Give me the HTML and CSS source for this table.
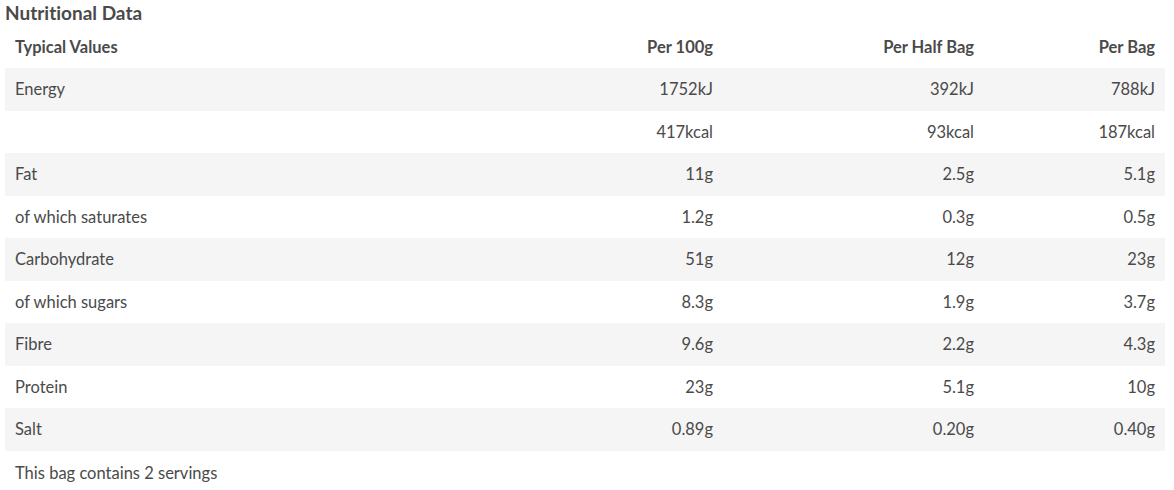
FILE: index.html
```html
<!DOCTYPE html>
<html>
<head>
<meta charset="utf-8">
<link rel="stylesheet" href="styles.css">
</head>
<body>
<section class="nutrition">
  <h2 class="title">Nutritional Data</h2>
  <table class="table">
    <colgroup>
      <col class="c1"><col class="c2"><col class="c3"><col class="c4">
    </colgroup>
    <thead>
      <tr><th class="left">Typical Values</th><th>Per 100g</th><th>Per Half Bag</th><th>Per Bag</th></tr>
    </thead>
    <tbody>
      <tr><td class="left">Energy</td><td>1752kJ</td><td>392kJ</td><td>788kJ</td></tr>
      <tr><td class="left"></td><td>417kcal</td><td>93kcal</td><td>187kcal</td></tr>
      <tr><td class="left">Fat</td><td>11g</td><td>2.5g</td><td>5.1g</td></tr>
      <tr><td class="left">of which saturates</td><td>1.2g</td><td>0.3g</td><td>0.5g</td></tr>
      <tr><td class="left">Carbohydrate</td><td>51g</td><td>12g</td><td>23g</td></tr>
      <tr><td class="left">of which sugars</td><td>8.3g</td><td>1.9g</td><td>3.7g</td></tr>
      <tr><td class="left">Fibre</td><td>9.6g</td><td>2.2g</td><td>4.3g</td></tr>
      <tr><td class="left">Protein</td><td>23g</td><td>5.1g</td><td>10g</td></tr>
      <tr><td class="left">Salt</td><td>0.89g</td><td>0.20g</td><td>0.40g</td></tr>
    </tbody>
  </table>
  <p class="note">This bag contains 2 servings</p>
</section>
</body>
</html>
```
FILE: styles.css
```css
html, body {
  margin: 0;
  padding: 0;
  background: #fff;
}
body {
  font-family: "Source Sans Pro", Lato, "Liberation Sans", sans-serif;
  font-size: 16.5px;
  color: #4a4a4a;
  font-variant-ligatures: none;
}
.nutrition {
  padding: 0 9px 0 5px;
}
.title {
  margin: 0;
  font-size: 19px;
  font-weight: 700;
  line-height: 26px;
  color: #4a4a4a;
}
.table {
  width: 100%;
  border-collapse: collapse;
  table-layout: fixed;
}
.c1 { width: 457px; }
.c2 { width: 261px; }
.c3 { width: 261px; }
.c4 { width: 181px; }
.table th, .table td {
  padding: 10px 10px;
  line-height: 22.5px;
  text-align: right;
  white-space: nowrap;
}
.table th {
  font-weight: 700;
  line-height: 22px;
}
.table .left {
  text-align: left;
}
.table tbody tr:nth-child(odd) {
  background: #f5f5f5;
}
.note {
  margin: 0;
  padding: 10px 10px;
  line-height: 24px;
}
```
